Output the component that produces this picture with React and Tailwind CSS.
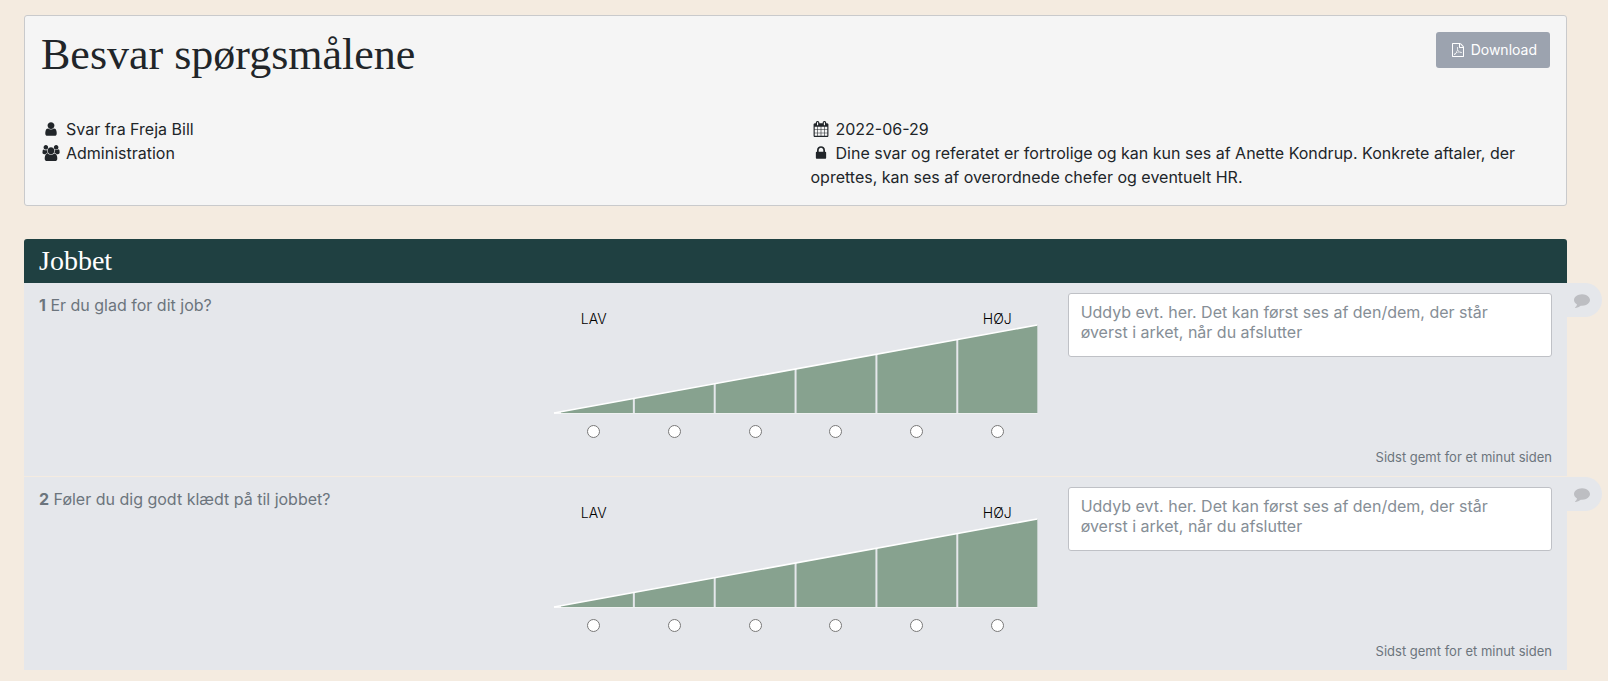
import React, { useState } from 'react';

const ICONS = {
  user: {
    viewBox: '0 0 1792 1792',
    d: 'M1536 1399q0 109-62.5 187t-150.5 78h-854q-88 0-150.5-78t-62.5-187q0-85 8.5-160.5t31.5-152 58.5-131 94-89 134.5-34.5q131 128 313 128t313-128q76 0 134.5 34.5t94 89 58.5 131 31.5 152 8.5 160.5zm-256-887q0 159-112.5 271.5t-271.5 112.5-271.5-112.5-112.5-271.5 112.5-271.5 271.5-112.5 271.5 112.5 112.5 271.5z',
  },
  users: {
    viewBox: '-64 0 1920 1792',
    d: 'M529 896q-162 5-265 128h-134q-82 0-138-40.5t-56-118.5q0-353 124-353 6 0 43.5 21t97.5 42.5 119 21.5q67 0 133-23-5 37-5 66 0 159 93 293zm1071 637q0 120-73 189.5t-194 69.5h-874q-121 0-194-69.5t-73-189.5q0-53 3.5-103.5t14-109 26.5-108.5 43-97.5 62-81 85.5-53.5 111.5-20q10 0 43 21.5t73 48 107 48 135 21.5 135-21.5 107-48 73-48 43-21.5q61 0 111.5 20t85.5 53.5 62 81 43 97.5 26.5 108.5 14 109 3.5 103.5zm-1024-1277q0 106-75 181t-181 75-181-75-75-181 75-181 181-75 181 75 75 181zm704 384q0 159-112.5 271.5t-271.5 112.5-271.5-112.5-112.5-271.5 112.5-271.5 271.5-112.5 271.5 112.5 112.5 271.5zm576 225q0 78-56 118.5t-138 40.5h-134q-103-123-265-128 93-134 93-293 0-29-5-66 66 23 133 23 59 0 119-21.5t97.5-42.5 43.5-21q124 0 124 353zm-128-609q0 106-75 181t-181 75-181-75-75-181 75-181 181-75 181 75 75 181z',
  },
  calendar: {
    viewBox: '0 0 1792 1792',
    d: 'M192 1664h288v-288h-288v288zm352 0h320v-288h-320v288zm-352-352h288v-320h-288v320zm352 0h320v-320h-320v320zm-352-384h288v-288h-288v288zm736 736h320v-288h-320v288zm-384-736h320v-288h-320v288zm768 736h288v-288h-288v288zm-384-352h320v-320h-320v320zm-352-864v-288q0-13-9.5-22.5t-22.5-9.5h-64q-13 0-22.5 9.5t-9.5 22.5v288q0 13 9.5 22.5t22.5 9.5h64q13 0 22.5-9.5t9.5-22.5zm736 864h288v-320h-288v320zm-384-384h320v-288h-320v288zm384 0h288v-288h-288v288zm32-480v-288q0-13-9.5-22.5t-22.5-9.5h-64q-13 0-22.5 9.5t-9.5 22.5v288q0 13 9.5 22.5t22.5 9.5h64q13 0 22.5-9.5t9.5-22.5zm384-64v1280q0 52-38 90t-90 38h-1408q-52 0-90-38t-38-90v-1280q0-52 38-90t90-38h128v-96q0-66 47-113t113-47h64q66 0 113 47t47 113v96h384v-96q0-66 47-113t113-47h64q66 0 113 47t47 113v96h128q52 0 90 38t38 90z',
  },
  lock: {
    viewBox: '0 0 1792 1792',
    d: 'M640 768h512v-192q0-106-75-181t-181-75-181 75-75 181v192zm832 96v576q0 40-28 68t-68 28h-960q-40 0-68-28t-28-68v-576q0-40 28-68t68-28h32v-192q0-184 132-316t316-132 316 132 132 316v192h32q40 0 68 28t28 68z',
  },
  comment: {
    viewBox: '0 0 1792 1792',
    d: 'M1792 896q0 174-120 321.5t-326 233-450 85.5q-70 0-145-8-198 175-460 242-49 14-114 22-17 2-30.5-9t-17.5-29v-1q-3-4-.5-12t2-10 4.5-9.5l6-9 7-8.5 8-9q7-8 31-34.5t34.5-38 31-39.5 32.5-51 27-59 26-76q-157-89-247.5-220t-90.5-281q0-130 71-248.5t191-204.5 286-136.5 348-50.5q244 0 450 85.5t326 233 120 321.5z',
  },
  pdf: {
    viewBox: '0 0 1792 1792',
    d: 'M1596 380q28 28 48 76t20 88v1152q0 40-28 68t-68 28h-1344q-40 0-68-28t-28-68v-1600q0-40 28-68t68-28h896q40 0 88 20t76 48zm-444-244v376h376q-10-29-22-41l-313-313q-12-12-41-22zm384 1528v-1024h-416q-40 0-68-28t-28-68v-416h-768v1536h1280zm-514-593q33 26 84 56 59-7 117-7 147 0 177 49 16 22 2 52 0 1-1 2l-2 2v1q-6 38-71 38-48 0-115-20t-130-53q-221 24-392 83-153 262-242 262-15 0-28-7l-24-12q-1-1-6-5-10-10-6-36 9-40 56-91.5t132-96.5q14-9 23 6 2 2 2 4 52-85 107-197 68-136 104-262-24-82-30.5-159.5t6.5-127.5q11-40 42-40h22q23 0 35 15 18 21 9 68-2 6-4 8 1 3 1 8v30q-2 123-14 192 55 164 146 238zm-576 411q52-24 137-158-51 40-87.5 84t-49.5 74zm398-920q-15 42-2 132 1-7 7-44 0-3 7-43 1-4 4-8-1-1-1-2-1-2-1-3-1-22-13-36 0 1-1 2v2zm-124 661q135-54 284-81-2-1-13-9.5t-16-13.5q-76-67-127-176-27 86-83 197-30 56-45 83zm646-16q-24-24-140-24 76 28 124 28 14 0 18-1 0-1-2-3z',
  },
};

const questions = [
  { id: 1, text: 'Er du glad for dit job?' },
  { id: 2, text: 'Føler du dig godt klædt på til jobbet?' },
];

const steps = [1, 2, 3, 4, 5, 6];

const Icon = ({ name, className }) => (
  <svg viewBox={ICONS[name].viewBox} fill="currentColor" aria-hidden="true" className={className}>
    <path d={ICONS[name].d} />
  </svg>
);

const Meta = ({ icon, children }) => (
  <p>
    <Icon name={icon} className="mr-[5px] inline-block h-4 w-5 align-[-2px]" />
    {children}
  </p>
);

const Wedge = () => (
  <svg viewBox="0 0 484 88" preserveAspectRatio="none" className="block h-[88px] w-full overflow-visible" aria-hidden="true">
    <polygon points="1,87 484,-1 484,87" fill="#87a28f" />
    {[1, 2, 3, 4, 5].map((i) => (
      <line key={i} x1={i * 80.8} x2={i * 80.8} y1={87 - i * 14.67} y2="87" stroke="#e5e7eb" strokeWidth="2" />
    ))}
    <path d="M1 87 L484 -1" stroke="#fff" strokeWidth="1.5" fill="none" />
    <path d="M1 87 L8 87" stroke="#fff" strokeWidth="1.5" fill="none" />
    <path d="M8 87.5 L484 87.5" stroke="#eff1f1" strokeWidth="1" fill="none" />
  </svg>
);

const Question = ({ question }) => {
  const [score, setScore] = useState(null);
  const [comment, setComment] = useState('');

  return (
    <li className="relative grid grid-cols-3 bg-[#e5e7eb]">
      <p id={`question-${question.id}`} className="px-[15px] pt-2.5 text-[#6c757d]">
        <strong className="font-bold">{question.id}</strong> {question.text}
      </p>

      <fieldset className="px-[15px] pt-7" aria-labelledby={`question-${question.id}`}>
        <div className="grid grid-cols-6 text-center text-sm leading-[15px] font-light text-black">
          <span>LAV</span>
          <span className="col-start-6">HØJ</span>
        </div>
        <Wedge />
        <div className="grid grid-cols-6 justify-items-center pt-[11px]">
          {steps.map((step) => (
            <input
              key={step}
              type="radio"
              name={`score-${question.id}`}
              aria-label={`Svar ${step}`}
              checked={score === step}
              onChange={() => setScore(step)}
              className="h-[13px] w-[13px]"
            />
          ))}
        </div>
      </fieldset>

      <div className="flex flex-col px-[15px] pt-2.5">
        <textarea
          rows={2}
          value={comment}
          onChange={(e) => setComment(e.target.value)}
          aria-label={`Uddybning til spørgsmål ${question.id}`}
          placeholder="Uddyb evt. her. Det kan først ses af den/dem, der står øverst i arket, når du afslutter"
          className="h-16 w-full resize-none rounded-[3px] border border-[#bfc1c6] bg-white px-3 py-2 leading-5 placeholder:text-[#868e96]"
        />
        <p className="mt-[90px] pb-[9px] text-right text-[13px] leading-5 text-[#6c757d]">Sidst gemt for et minut siden</p>
      </div>

      <button
        type="button"
        aria-label="Kommentarer"
        className="absolute top-0 left-full flex h-[34px] w-[35px] items-center rounded-r-full bg-[#e5e7eb] pl-[7px] text-[#bdbec2]"
      >
        <Icon name="comment" className="h-4 w-4" />
      </button>
    </li>
  );
};

const App = () => {
  return (
    <div className="min-h-screen bg-[#f4ebe0] pt-[15px] pr-[41px] pb-[11px] pl-6 font-['Inter',sans-serif] text-base font-normal text-[#212529]">
      <header className="rounded-[3px] border border-[#c9cacc] bg-[#f5f5f5] pt-4 pb-4">
        <div className="flex items-start justify-between px-4">
          <h1 className="font-['Liberation_Serif',serif] text-[44px] leading-[46px] font-normal">Besvar spørgsmålene</h1>
          <button type="button" className="flex h-9 items-center gap-[5px] rounded-[3px] bg-[#9ca3af] pr-[13px] pl-3.5 text-sm text-white">
            <Icon name="pdf" className="h-3.5 w-4" />
            Download
          </button>
        </div>
        <div className="mx-px mt-[39px] grid grid-cols-2 leading-6">
          <div className="px-[15px]">
            <Meta icon="user">Svar fra Freja Bill</Meta>
            <Meta icon="users">Administration</Meta>
          </div>
          <div className="px-[15px]">
            <Meta icon="calendar">2022-06-29</Meta>
            <Meta icon="lock">
              Dine svar og referatet er fortrolige og kan kun ses af Anette Kondrup. Konkrete aftaler, der oprettes, kan ses af
              overordnede chefer og eventuelt HR.
            </Meta>
          </div>
        </div>
      </header>

      <section className="mt-[33px]">
        <h2 className="rounded-t-[3px] bg-[#1f4041] px-[15px] font-['Liberation_Serif',serif] text-[28px] leading-[44px] font-normal text-white">
          Jobbet
        </h2>
        <ul className="flex flex-col gap-px">
          {questions.map((question) => (
            <Question key={question.id} question={question} />
          ))}
        </ul>
      </section>
    </div>
  );
};

export default App;
